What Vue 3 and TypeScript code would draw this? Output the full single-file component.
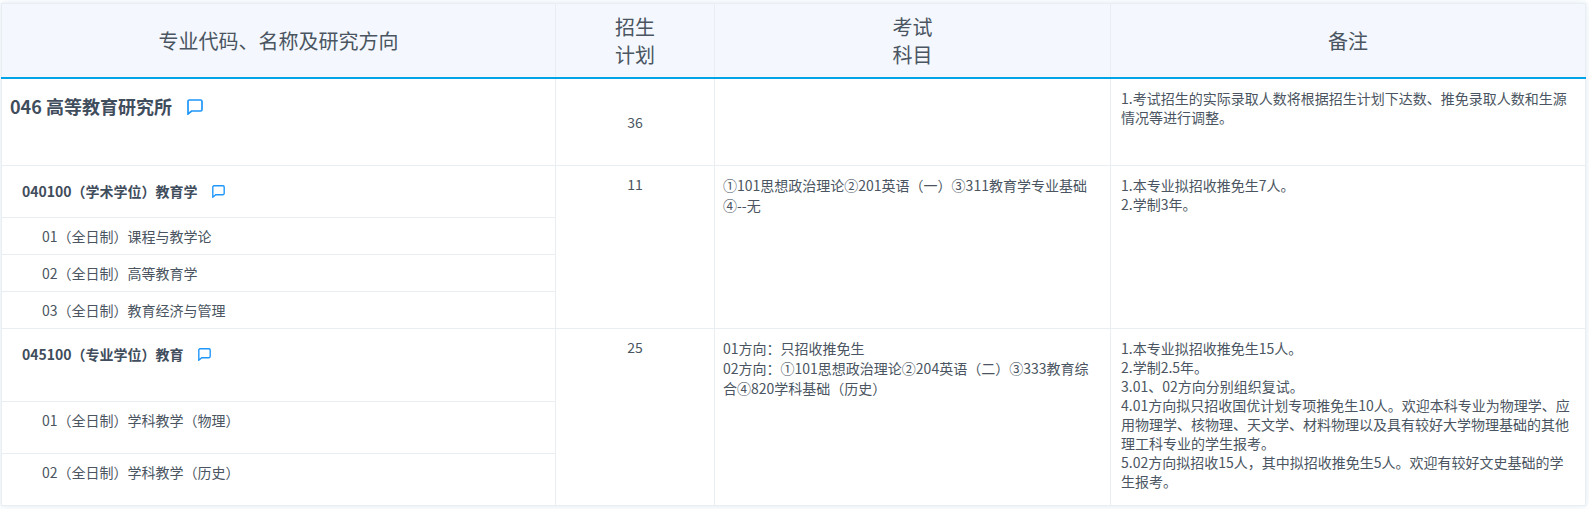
<script setup lang="ts">
interface Row {
  label: string
  kind: 'dept' | 'major' | 'dir'
  height: number
  plan?: string
  exam?: string[]
  note?: string[]
  span?: number
}

const rows: Row[] = [
  {
    label: '046 高等教育研究所',
    kind: 'dept',
    height: 87,
    plan: '36',
    exam: [],
    note: ['1.考试招生的实际录取人数将根据招生计划下达数、推免录取人数和生源情况等进行调整。'],
    span: 1
  },
  {
    label: '040100（学术学位）教育学',
    kind: 'major',
    height: 52,
    plan: '11',
    exam: ['①101思想政治理论②201英语（一）③311教育学专业基础④--无'],
    note: ['1.本专业拟招收推免生7人。', '2.学制3年。'],
    span: 4
  },
  { label: '01（全日制）课程与教学论', kind: 'dir', height: 37 },
  { label: '02（全日制）高等教育学', kind: 'dir', height: 37 },
  { label: '03（全日制）教育经济与管理', kind: 'dir', height: 37 },
  {
    label: '045100（专业学位）教育',
    kind: 'major',
    height: 73,
    plan: '25',
    exam: ['01方向：只招收推免生', '02方向：①101思想政治理论②204英语（二）③333教育综合④820学科基础（历史）'],
    note: [
      '1.本专业拟招收推免生15人。',
      '2.学制2.5年。',
      '3.01、02方向分别组织复试。',
      '4.01方向拟只招收国优计划专项推免生10人。欢迎本科专业为物理学、应用物理学、核物理、天文学、材料物理以及具有较好大学物理基础的其他理工科专业的学生报考。',
      '5.02方向拟招收15人，其中拟招收推免生5人。欢迎有较好文史基础的学生报考。'
    ],
    span: 3
  },
  { label: '01（全日制）学科教学（物理）', kind: 'dir', height: 52 },
  { label: '02（全日制）学科教学（历史）', kind: 'dir', height: 52 }
]
</script>

<template>
  <div class="page">
    <table class="catalog">
      <colgroup>
        <col class="c-name" />
        <col class="c-plan" />
        <col class="c-exam" />
        <col class="c-note" />
      </colgroup>
      <thead>
        <tr>
          <th>专业代码、名称及研究方向</th>
          <th>招生<br />计划</th>
          <th>考试<br />科目</th>
          <th>备注</th>
        </tr>
      </thead>
      <tbody>
        <tr v-for="row in rows" :key="row.label" :style="{ height: row.height + 'px' }">
          <td class="name" :class="row.kind">
            <span>{{ row.label }}</span>
            <svg v-if="row.kind !== 'dir'" class="bubble" viewBox="0 0 16 16" fill="none">
              <path d="M2.4 1h11.2c.8 0 1.4.6 1.4 1.4v8.2c0 .8-.6 1.4-1.4 1.4H4.6L1 15V2.4C1 1.6 1.6 1 2.4 1z" />
            </svg>
          </td>
          <template v-if="row.span">
            <td class="plan" :class="{ middle: row.kind === 'dept' }" :rowspan="row.span">{{ row.plan }}</td>
            <td class="text exam" :rowspan="row.span">
              <div v-for="line in row.exam" :key="line">{{ line }}</div>
            </td>
            <td class="text" :rowspan="row.span">
              <div v-for="line in row.note" :key="line">{{ line }}</div>
            </td>
          </template>
        </tr>
      </tbody>
    </table>
  </div>
</template>

<style>
html,
body {
  margin: 0;
  background: #ffffff;
}
</style>

<style scoped>
.page {
  padding: 3px 4px 4px 1px;
  font-family: "Noto Sans CJK SC", "Noto Sans", sans-serif;
  color: #4a5561;
}
.catalog {
  width: 1584px;
  table-layout: fixed;
  border-collapse: collapse;
  background: #ffffff;
  box-shadow: 0 0 6px rgba(100, 150, 190, 0.22);
  font-size: 14px;
  line-height: 19px;
}
.c-name { width: 554px; }
.c-plan { width: 159px; }
.c-exam { width: 396px; }
.c-note { width: 475px; }
th {
  height: 73px;
  padding: 0;
  background: #f4f8fe;
  border: 1px solid #e9eef3;
  border-bottom: 2px solid #00a3e6;
  font-size: 20px;
  font-weight: 400;
  line-height: 28px;
  text-align: center;
  color: #4a5561;
}
td {
  padding: 0;
  border: 1px solid #e9eef3;
  vertical-align: top;
}
.name {
  white-space: nowrap;
}
.dept {
  padding: 16px 0 0 8px;
  font-size: 18px;
  line-height: 22px;
  font-weight: 700;
  color: #3f4d5c;
}
.major {
  padding: 16px 0 0 20px;
  font-weight: 700;
  color: #3f4d5c;
}
.dir {
  padding: 9px 0 0 40px;
}
.bubble {
  margin-left: 15px;
  stroke: #1e96fa;
  stroke-width: 1.7;
  vertical-align: -1px;
}
.dept .bubble {
  width: 16px;
  height: 16px;
}
.major .bubble {
  margin-left: 14px;
  width: 13px;
  height: 13px;
}
.plan {
  padding-top: 9px;
  text-align: center;
}
.plan.middle {
  padding-top: 2px;
  vertical-align: middle;
}
.text {
  padding: 10px 10px 0;
}
.exam {
  padding: 9px 10px 0 8px;
  line-height: 20px;
}
</style>
